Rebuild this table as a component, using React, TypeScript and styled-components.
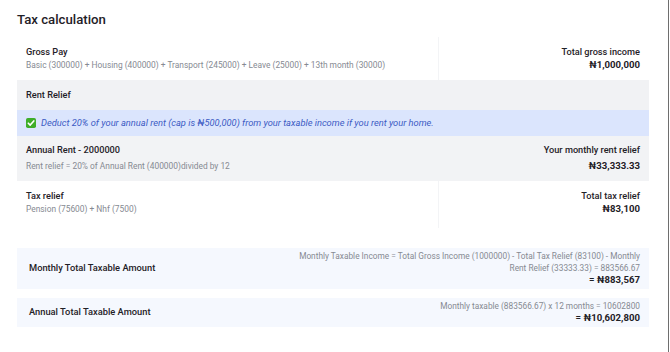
import { FC, ReactNode } from 'react'
import styled, { createGlobalStyle } from 'styled-components'

const GlobalStyle = createGlobalStyle`
	html, body {
		margin: 0;
		padding: 0;
		background: #ffffff;
	}
	body {
		font-family: Roboto, 'Noto Sans', sans-serif;
		color: #1f2127;
	}
`

const Page = styled.main`
	width: 669px;
	min-height: 352px;
	box-sizing: border-box;
	border-right: 1px solid #6e6e6e;
	padding: 12px 19px 20px 17px;
`

const Title = styled.h1`
	margin: 0 0 9px;
	font-size: 13.2px;
	font-weight: 500;
	line-height: 16px;
`

const Section = styled.section`
	display: flex;
	flex-direction: column;
`

const Row = styled.div<{ $bg?: string }>`
	display: grid;
	grid-template-columns: 2fr 1fr;
	background: ${(p) => p.$bg ?? '#ffffff'};
`

const Cell = styled.div<{ $right?: boolean; $divider?: boolean; $pad: string }>`
	display: flex;
	flex-direction: column;
	align-items: ${(p) => (p.$right ? 'flex-end' : 'flex-start')};
	text-align: ${(p) => (p.$right ? 'right' : 'left')};
	padding: ${(p) => p.$pad};
	border-left: ${(p) => (p.$divider ? '1px solid #f3f4f6' : 'none')};
`

const Label = styled.div`
	font-size: 9.2px;
	font-weight: 500;
	line-height: 12px;
`

const Sub = styled.div<{ $gap: number }>`
	font-size: 8.4px;
	line-height: 12px;
	color: #868a92;
	margin-top: ${(p) => p.$gap}px;
`

const Amount = styled.div<{ $gap: number }>`
	font-size: 9.6px;
	font-weight: 700;
	line-height: 12px;
	margin-top: ${(p) => p.$gap}px;
`

const Header = styled.div`
	background: #f1f2f4;
	padding: 9px 9px 9px;
	font-size: 9.2px;
	font-weight: 500;
	line-height: 12px;
`

const Banner = styled.div`
	display: flex;
	align-items: center;
	gap: 5px;
	background: #dbe5fd;
	padding: 7px 9px;
	font-size: 9.3px;
	font-style: italic;
	line-height: 12px;
	color: #3c5bc4;
`

const Summary = styled.div<{ $top: number }>`
	display: flex;
	align-items: center;
	justify-content: space-between;
	gap: 24px;
	margin-top: ${(p) => p.$top}px;
	padding: 3px 9px;
	background: #f5f8fe;
`

const SummaryLabel = styled.div`
	padding-left: 3px;
	font-size: 9.3px;
	font-weight: 500;
	line-height: 12px;
`

const SummaryRight = styled.div`
	display: flex;
	flex-direction: column;
	align-items: flex-end;
	text-align: right;
	max-width: 345px;
	font-size: 8.3px;
	line-height: 11.5px;
	color: #868a92;
`

const SummaryTotal = styled.div`
	font-size: 9.6px;
	font-weight: 700;
	line-height: 11.5px;
	color: #1f2127;
`

const Check: FC = () => (
	<svg width='10' height='10' viewBox='0 0 10 10' aria-hidden='true'>
		<rect x='0' y='0' width='10' height='10' rx='1.8' fill='#3fae2a' />
		<path d='M2.3 5.2 L4.2 7.1 L7.8 2.9' stroke='#ffffff' strokeWidth='1.6' fill='none' strokeLinecap='round' strokeLinejoin='round' />
	</svg>
)

type SplitRowProps = {
	bg?: string
	divider?: boolean
	pad: string
	title: string
	detail: string
	rightTitle: string
	amount: ReactNode
	gap: number
}

const SplitRow: FC<SplitRowProps> = ({ bg, divider, pad, title, detail, rightTitle, amount, gap }) => (
	<Row $bg={bg}>
		<Cell $pad={pad}>
			<Label>{title}</Label>
			<Sub $gap={gap}>{detail}</Sub>
		</Cell>
		<Cell $right $divider={divider} $pad={pad}>
			<Label>{rightTitle}</Label>
			<Amount $gap={gap}>{amount}</Amount>
		</Cell>
	</Row>
)

export default function App() {
	return (
		<>
			<GlobalStyle />
			<Page>
				<Title>Tax calculation</Title>
				<Section>
					<SplitRow
						divider
						pad='9px 9px'
						gap={1}
						title='Gross Pay'
						detail='Basic (300000) + Housing (400000) + Transport (245000) + Leave (25000) + 13th month (30000)'
						rightTitle='Total gross income'
						amount='₦1,000,000'
					/>
					<Header>Rent Relief</Header>
					<Banner>
						<Check />
						<span>Deduct 20% of your annual rent (cap is ₦500,000) from your taxable income if you rent your home.</span>
					</Banner>
					<SplitRow
						bg='#f2f3f5'
						pad='8px 9px 9px'
						gap={4}
						title='Annual Rent - 2000000'
						detail='Rent relief = 20% of Annual Rent (400000)divided by 12'
						rightTitle='Your monthly rent relief'
						amount='₦33,333.33'
					/>
					<SplitRow
						divider
						pad='9px 9px 13px'
						gap={1}
						title='Tax relief'
						detail='Pension (75600) + Nhf (7500)'
						rightTitle='Total tax relief'
						amount='₦83,100'
					/>
				</Section>
				<Summary $top={20}>
					<SummaryLabel>Monthly Total Taxable Amount</SummaryLabel>
					<SummaryRight>
						<span>Monthly Taxable Income = Total Gross Income (1000000) - Total Tax Relief (83100) - Monthly Rent Relief (33333.33) = 883566.67</span>
						<SummaryTotal>= ₦883,567</SummaryTotal>
					</SummaryRight>
				</Summary>
				<Summary $top={9}>
					<SummaryLabel>Annual Total Taxable Amount</SummaryLabel>
					<SummaryRight>
						<span>Monthly taxable (883566.67) x 12 months = 10602800</span>
						<SummaryTotal>= ₦10,602,800</SummaryTotal>
					</SummaryRight>
				</Summary>
			</Page>
		</>
	)
}
